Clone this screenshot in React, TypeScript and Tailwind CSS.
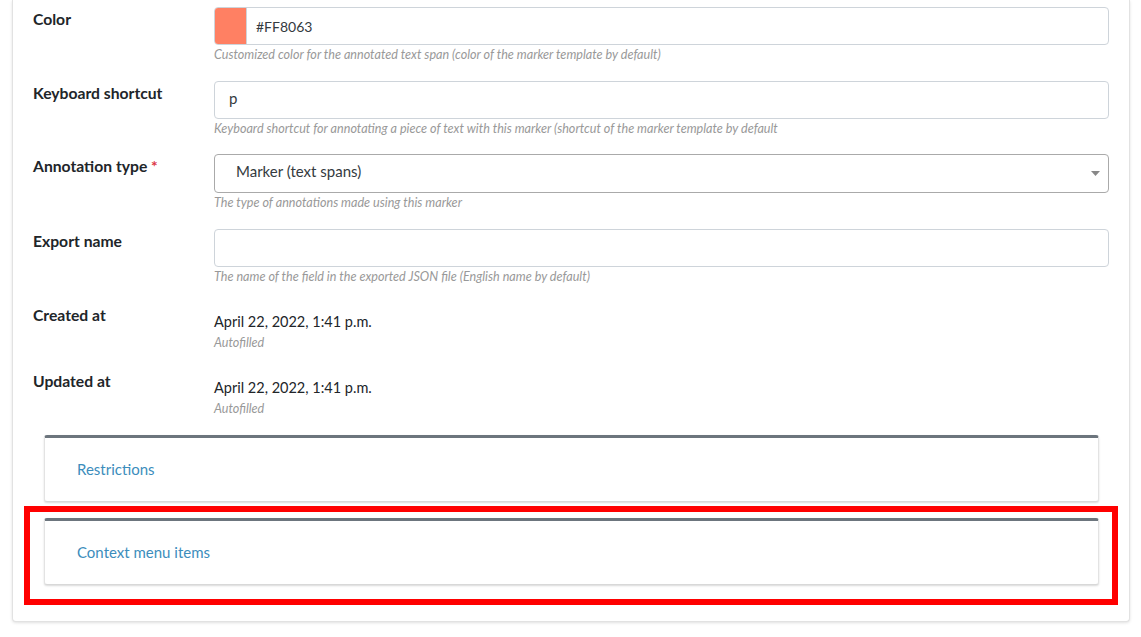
import React from "react";

const font = { fontFamily: "Lato, 'Noto Sans', sans-serif" };

function Help({ children }: { children: React.ReactNode }) {
  return <div className="h-[18px] text-[12.6px] leading-[18px] italic text-[#999999] mt-px">{children}</div>;
}

function InputRow({ label, required, children, help }: { label: string; required?: boolean; children: React.ReactNode; help: string }) {
  return (
    <div className="flex h-[74px]">
      <div className="w-[181px] shrink-0 pt-0 text-[15.7px] leading-[24px] font-bold text-[#212529]">
        {label}
        {required && <span className="text-[#dc3545]"> *</span>}
      </div>
      <div className="flex-1">
        {children}
        <Help>{help}</Help>
      </div>
    </div>
  );
}

function StaticRow({ label, value }: { label: string; value: string }) {
  return (
    <div className="flex h-[66px]">
      <div className="w-[181px] shrink-0 text-[15.7px] leading-[24px] font-bold text-[#212529]">{label}</div>
      <div className="flex-1 pt-[7px]">
        <div className="text-[14.5px] leading-[24px] text-[#212529]">{value}</div>
        <div className="h-[18px] text-[12.6px] leading-[18px] italic text-[#999999]">Autofilled</div>
      </div>
    </div>
  );
}

function Panel({ title }: { title: string }) {
  return (
    <div className="h-[67px] bg-white rounded-[3px] border-t-[3px] border-t-[#6c757d] border-x border-b border-x-[#e3e3e3] border-b-[#d8d8d8] shadow-[0_1px_2px_rgba(0,0,0,0.15)] flex items-center pl-[32px] pb-[1px]">
      <span className="text-[15px] text-[#3c8dbc] leading-[20px]">{title}</span>
    </div>
  );
}

export default function App() {
  return (
    <div className="w-[1141px] h-[637px] bg-white overflow-hidden" style={font}>
      <div className="ml-[12px] w-[1118px] h-[622px] bg-white border-x border-b border-[#e2e2e2] rounded-b-[4px] shadow-[0_1px_3px_rgba(0,0,0,0.12)] pl-[20px] pr-[20px] pt-[7px]">
        <InputRow label="Color" help="Customized color for the annotated text span (color of the marker template by default)">
          <div className="h-[38px] flex border border-[#ced4da] rounded-[4px] overflow-hidden">
            <div className="w-[32px] h-full bg-[#FF8063] border-r border-[#ced4da]" />
            <div className="flex items-center pl-[9px] text-[14px] text-[#343a40]">#FF8063</div>
          </div>
        </InputRow>
        <InputRow label="Keyboard shortcut" help="Keyboard shortcut for annotating a piece of text with this marker (shortcut of the marker template by default">
          <div className="h-[38px] flex items-center border border-[#ced4da] rounded-[4px] pl-[14px] pb-[3px] text-[15px] text-[#343a40]">p</div>
        </InputRow>
        <div className="mt-[-1px]">
          <InputRow label="Annotation type" required help="The type of annotations made using this marker">
            <div className="h-[39px] flex items-center justify-between border border-[#aaaaaa] rounded-[4px] pl-[21px] pr-[8px] pb-[4px] text-[15px] text-[#343a40]">
              <span>Marker (text spans)</span>
              <svg width="9" height="6" viewBox="0 0 9 6" className="mt-[4px]"><path d="M0 0 L9 0 L4.5 5 Z" fill="#888888" /></svg>
            </div>
          </InputRow>
        </div>
        <div className="mt-[1px]">
          <InputRow label="Export name" help="The name of the field in the exported JSON file (English name by default)">
            <div className="h-[38px] border border-[#ced4da] rounded-[4px]" />
          </InputRow>
        </div>
        <StaticRow label="Created at" value="April 22, 2022, 1:41 p.m." />
        <StaticRow label="Updated at" value="April 22, 2022, 1:41 p.m." />
        <div className="ml-[11px] mr-[10px] mt-0">
          <Panel title="Restrictions" />
          <div className="relative mt-[16px]">
            <div className="h-[68px]">
              <Panel title="Context menu items" />
            </div>
            <div className="absolute left-[-20px] right-[-19px] top-[-12px] bottom-[-19px] border-[6px] border-[#ff0000] pointer-events-none" />
          </div>
        </div>
      </div>
    </div>
  );
}
